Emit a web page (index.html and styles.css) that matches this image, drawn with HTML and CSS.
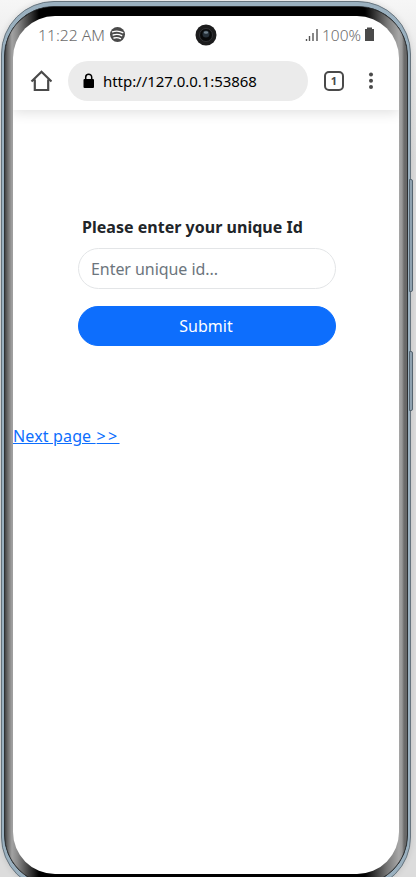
FILE: index.html
```
<!DOCTYPE html>
<html lang="en">
<head>
<meta charset="utf-8">
<title>Unique Id</title>
<link rel="stylesheet" href="styles.css">
</head>
<body>
<div class="stage">
  <span class="side-key volume"></span>
  <span class="side-key power"></span>
  <div class="phone">
    <div class="bezel">
      <div class="sheen"></div>
      <main class="screen">
        <header class="browser">
          <div class="status">
            <svg class="status-text" width="362" height="24" viewBox="0 0 362 24">
              <text x="13" y="18" textLength="67" lengthAdjust="spacingAndGlyphs">11:22 AM</text>
              <circle cx="92.500" cy="11.500" r="7.500" fill="#4a4a4a"/>
              <path d="M87.500 8.800q5.500-1.800 10.300 .9M88.200 12q4.500-1.500 8.500 .7M89 15q3.500-1 6.500 .6" fill="none" stroke="#fff" stroke-width="1.400" stroke-linecap="round"/>
              <path d="M281.500 18v-2M284.500 18v-5M288 18v-8M292 18v-12" stroke="#555" stroke-width="1.400"/>
              <text x="297" y="18" textLength="39" lengthAdjust="spacingAndGlyphs">100%</text>
              <path d="M340 6h2V4.500h5V6h2v12h-9z" fill="#4a4a4a"/>
            </svg>
            <svg class="camera" width="22" height="22" viewBox="0 0 22 22">
              <circle cx="11" cy="11" r="10.500" fill="#1c1c1d"/>
              <circle cx="11" cy="11" r="6.500" fill="#08090a" stroke="#333437"/>
              <circle cx="11" cy="10" r="3.500" fill="#263039"/>
              <ellipse cx="11" cy="8.500" rx="2.200" ry="1.300" fill="#70808c"/>
            </svg>
          </div>
          <nav class="toolbar">
            <svg class="home" width="22" height="22" viewBox="0 0 22 22"><path d="M1.500 11.500L11.500 1.700l10 9.800M4.800 9.500v10.500h13.400V9.500" fill="none" stroke="#4a4a4a" stroke-width="2.200"/></svg>
            <div class="address">
              <svg width="12" height="16" viewBox="0 0 12 16"><rect x=".5" y="6" width="10.500" height="9" rx="1" fill="#000"/><path d="M2.700 7V4.200a3 3 0 0 1 6 0V7" fill="none" stroke="#000" stroke-width="1.500"/></svg>
              <span>http://127.0.0.1:53868</span>
            </div>
            <div class="tabs">1</div>
            <svg class="more" width="6" height="20" viewBox="0 0 6 20"><g fill="#4a4a4a"><circle cx="3" cy="3.500" r="2"/><circle cx="3" cy="9.800" r="2"/><circle cx="3" cy="16" r="2"/></g></svg>
          </nav>
        </header>
        <form class="form">
          <label for="uid">Please enter your unique Id</label>
          <input id="uid" type="text" placeholder="Enter unique id...">
          <button type="button">Submit</button>
        </form>
        <a class="next" href="#">Next page <span class="arrows">&gt;&gt;</span></a>
      </main>
    </div>
  </div>
</div>
</body>
</html>
```
FILE: styles.css
```
* { box-sizing: border-box; }
body {
  margin: 0;
  overflow: hidden;
  background: #fff;
  color: #212529;
  font-family: "Noto Sans", sans-serif;
  font-size: 16px;
}
.stage {
  position: relative;
  width: 416px;
  height: 877px;
  padding: 1px 5px 0 1px;
  overflow: hidden;
  background: linear-gradient(180deg, #f6f6f6, #e6e6e6 80px, #dcdcdc 160px);
}
.phone {
  width: 410px;
  height: 889px;
  padding: 4px 2px;
  border: 1px solid #66747e;
  border-radius: 53px;
  background: #9ab0bf;
  box-shadow: 0 0 6px rgba(0, 0, 0, .12);
}
.bezel {
  position: relative;
  height: 879px;
  padding: 9px 8px 0;
  border: 1px solid #2c3033;
  border-radius: 50px;
  overflow: hidden;
  background: #000;
}
.sheen {
  position: absolute;
  inset: 0;
  background: linear-gradient(90deg, #444 0, #707070 3px, #a2a2a2 7px, #8c8c8c 12px, #000 34px, #000 360px, #777 382px, #a7a7a7 394px, #999 397px, #6c6c6c 399px, #666 402px);
}
.screen {
  position: relative;
  width: 386px;
  height: 858px;
  border-radius: 42px;
  overflow: hidden;
  background: #fff;
}
.browser {
  height: 94px;
  box-shadow: 0 3px 12px rgba(0, 0, 0, .12);
}
.status {
  position: relative;
  height: 40px;
  padding: 7px 12px;
}
.status-text {
  display: block;
  fill: #6c6c6c;
  font-size: 15px;
  font-weight: 300;
}
.camera { position: absolute; left: 182px; top: 8px; }
.toolbar {
  display: flex;
  align-items: center;
  height: 50px;
  padding-left: 17px;
}
.address {
  display: flex;
  align-items: center;
  width: 240px;
  height: 40px;
  margin-left: 16px;
  padding-left: 15px;
  border-radius: 20px;
  background: #ebebeb;
  color: #000;
  font-size: 15px;
}
.address span { margin-left: 8px; letter-spacing: -.05px; white-space: nowrap; }
.tabs {
  width: 20px;
  height: 20px;
  margin-left: 16px;
  border: 2px solid #4a4a4a;
  border-radius: 5px;
  color: #4a4a4a;
  font-size: 11px;
  font-weight: 700;
  line-height: 16px;
  text-align: center;
}
.more { margin-left: 24px; }
.form {
  display: flex;
  flex-direction: column;
  width: 258px;
  margin: 105px 0 0 65px;
}
label {
  height: 24px;
  margin: 0 0 9px 4px;
  font-size: 16px;
  font-weight: 700;
  line-height: 24px;
  letter-spacing: .02px;
  white-space: nowrap;
}
input, button {
  height: 40px;
  margin: 0;
  border-radius: 21px;
  font-family: inherit;
  font-size: 16px;
}
input {
  height: 41px;
  padding: 1px 12px 0;
  border: 1px solid #e3e5e7;
  background: #fff;
  letter-spacing: -.06px;
}
input::placeholder { color: #6c757d; opacity: 1; }
button {
  margin-top: 17px;
  padding: 0 2px 0 0;
  border: 1px solid #0d6efd;
  background: #0d6efd;
  color: #fff;
}
.next {
  display: inline-block;
  margin-top: 78px;
  color: #0d6efd;
  font-size: 16px;
  line-height: 24px;
  letter-spacing: .15px;
}
.arrows { letter-spacing: 2.300px; margin-left: 1px; }
.side-key {
  position: absolute;
  left: 409px;
  width: 4px;
  border: 1px solid #566570;
  border-radius: 0 2px 2px 0;
  background: #8fa2b0;
}
.volume { top: 179px; height: 113px; }
.power { top: 351px; height: 60px; }
```
